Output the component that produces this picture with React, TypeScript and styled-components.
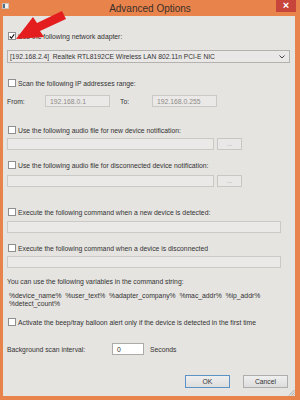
import React from "react";
import styled, { createGlobalStyle } from "styled-components";

const GlobalStyle = createGlobalStyle`
  html, body {
    margin: 0;
    padding: 0;
    background: #e9834c;
  }
  * {
    box-sizing: border-box;
  }
`;

export default function App() {
  return (
    <>
      <GlobalStyle />
      <Window>
        <TitleBar>
          <AppIcon />
          <Title>Advanced Options</Title>
          <CloseButton aria-label="Close">×</CloseButton>
        </TitleBar>

        <Body>
          <CheckRow $top={15}>
            <CheckBox>
              <svg viewBox="0 0 8 8" width="7" height="7">
                <path d="M1 4 L3.2 6.3 L7 1.2" fill="none" stroke="#111" strokeWidth="1.5" />
              </svg>
            </CheckBox>
            <span>Use the following network adapter:</span>
          </CheckRow>
          <Select $top={9}>
            <span>[192.168.2.4]&nbsp;&nbsp;Realtek RTL8192CE Wireless LAN 802.11n PCI-E NIC</span>
            <Chevron viewBox="0 0 6 4">
              <path d="M0.5 0.5 L3 3 L5.5 0.5" fill="none" stroke="#444" strokeWidth="1" />
            </Chevron>
          </Select>

          <CheckRow $top={15}>
            <CheckBox />
            <span>Scan the following IP addresses range:</span>
          </CheckRow>
          <RangeRow $top={7}>
            <FieldLabel $width={38}>From:</FieldLabel>
            <TextBox $width={65} $disabled>192.168.0.1</TextBox>
            <FieldLabel $width={42} $indent={10}>To:</FieldLabel>
            <TextBox $width={65} $disabled>192.168.0.255</TextBox>
          </RangeRow>

          <CheckRow $top={18}>
            <CheckBox />
            <span>Use the following audio file for new device notification:</span>
          </CheckRow>
          <FileRow $top={3}>
            <TextBox $width={207} $disabled />
            <BrowseButton>...</BrowseButton>
          </FileRow>

          <CheckRow $top={10}>
            <CheckBox />
            <span>Use the following audio file for disconnected device notification:</span>
          </CheckRow>
          <FileRow $top={5}>
            <TextBox $width={207} $disabled />
            <BrowseButton>...</BrowseButton>
          </FileRow>

          <CheckRow $top={20}>
            <CheckBox />
            <span>Execute the following command when a new device is detected:</span>
          </CheckRow>
          <FileRow $top={4}>
            <TextBox $width={274} $disabled />
          </FileRow>

          <CheckRow $top={10}>
            <CheckBox />
            <span>Execute the following command when a device is disconnected</span>
          </CheckRow>
          <FileRow $top={3}>
            <TextBox $width={274} $disabled />
          </FileRow>

          <Note $top={9}>You can use the following variables in the command string:</Note>
          <Variables>
            %device_name%&nbsp; %user_text%&nbsp; %adapter_company%&nbsp; %mac_addr%&nbsp; %ip_addr%
            <br />
            %detect_count%
          </Variables>

          <CheckRow $top={9}>
            <CheckBox />
            <span>Activate the beep/tray balloon alert only if the device is detected in the first time</span>
          </CheckRow>

          <IntervalRow>
            <FieldLabel $width={105}>Background scan interval:</FieldLabel>
            <TextBox $width={32}>0</TextBox>
            <Unit>Seconds</Unit>
          </IntervalRow>

          <ButtonBar>
            <DialogButton $default>OK</DialogButton>
            <DialogButton>Cancel</DialogButton>
          </ButtonBar>
          <Grip viewBox="0 0 7 7">
            <path d="M6.5 1 L1 6.5 M6.5 3.5 L3.5 6.5 M6.5 5.5 L5.5 6.5" stroke="#9a9a9a" strokeWidth="0.8" />
          </Grip>
        </Body>

        <Arrow viewBox="0 0 300 60">
          <path d="M62 11 L66 19 L40 31 L44 37 L16 39 L33 17 L37 23 Z" fill="#e41e1e" />
        </Arrow>
      </Window>
    </>
  );
}

const Window = styled.div`
  position: relative;
  width: 300px;
  height: 400px;
  background: #e9834c;
  display: flex;
  flex-direction: column;
  font-family: "Liberation Sans", Arial, sans-serif;
  color: #333;
  overflow: hidden;
`;

const TitleBar = styled.div`
  height: 16px;
  display: flex;
  align-items: center;
  position: relative;
`;

const AppIcon = styled.div`
  position: absolute;
  left: 2px;
  top: 3px;
  width: 7px;
  height: 6px;
  background: #f4f1ee;
  border: 1px solid #c9c2bc;
  &::after {
    content: "";
    position: absolute;
    left: 0;
    top: 0;
    width: 2px;
    height: 4px;
    background: #4f6e84;
  }
`;

const Title = styled.div`
  flex: 1;
  text-align: center;
  font-size: 10px;
  color: #3b3028;
  padding-top: 1px;
`;

const CloseButton = styled.div`
  position: absolute;
  right: 4px;
  top: 0;
  width: 20px;
  height: 12px;
  background: #c8453c;
  color: #fff;
  font-size: 11px;
  font-weight: bold;
  line-height: 11px;
  text-align: center;
`;

const Body = styled.div`
  position: relative;
  flex: 1;
  margin: 0 5px 4px 3px;
  padding: 0 5px 0 4px;
  background: #e6e4e1;
  display: flex;
  flex-direction: column;
  font-size: 6.8px;
`;

const CheckRow = styled.div<{ $top: number }>`
  margin-top: ${(p) => p.$top}px;
  height: 10px;
  display: flex;
  align-items: center;
  gap: 2px;
  padding-left: 1px;
  white-space: nowrap;
`;

const CheckBox = styled.div`
  width: 8px;
  height: 8px;
  flex: none;
  display: flex;
  align-items: center;
  justify-content: center;
  background: #fff;
  border: 1px solid #8f8f8f;
`;

const Select = styled.div<{ $top: number }>`
  margin-top: ${(p) => p.$top}px;
  height: 13px;
  display: flex;
  align-items: center;
  justify-content: space-between;
  padding: 0 4px 0 2px;
  background: #e9e8e6;
  border: 1px solid #b4b2af;
  font-size: 6.7px;
  white-space: nowrap;
`;

const Chevron = styled.svg`
  width: 6px;
  height: 4px;
`;

const RangeRow = styled.div<{ $top: number }>`
  margin-top: ${(p) => p.$top}px;
  height: 12px;
  display: flex;
  align-items: center;
`;

const FileRow = styled.div<{ $top: number }>`
  margin-top: ${(p) => p.$top}px;
  height: 12px;
  display: flex;
  align-items: center;
  gap: 3px;
`;

const FieldLabel = styled.span<{ $width: number; $indent?: number }>`
  width: ${(p) => p.$width}px;
  padding-left: ${(p) => p.$indent ?? 0}px;
  flex: none;
  white-space: nowrap;
`;

const TextBox = styled.div<{ $width: number; $disabled?: boolean }>`
  width: ${(p) => p.$width}px;
  height: 12px;
  flex: none;
  display: flex;
  align-items: center;
  padding-left: 4px;
  background: ${(p) => (p.$disabled ? "#ebe9e7" : "#ffffff")};
  border: 1px solid ${(p) => (p.$disabled ? "#cbc9c6" : "#adaaa7")};
  color: ${(p) => (p.$disabled ? "#8d8b88" : "#333")};
`;

const BrowseButton = styled.div`
  width: 25px;
  height: 12px;
  flex: none;
  display: flex;
  align-items: center;
  justify-content: center;
  background: #eae8e6;
  border: 1px solid #c9c7c4;
  color: #8d8b88;
  font-size: 6px;
`;

const Note = styled.div<{ $top: number }>`
  margin-top: ${(p) => p.$top}px;
  height: 10px;
  line-height: 10px;
  white-space: nowrap;
`;

const Variables = styled.div`
  margin-top: 5px;
  padding-left: 2px;
  line-height: 8px;
  white-space: nowrap;
`;

const IntervalRow = styled.div`
  margin-top: 16px;
  height: 12px;
  display: flex;
  align-items: center;
`;

const Unit = styled.span`
  margin-left: 6px;
`;

const ButtonBar = styled.div`
  margin-top: 20px;
  height: 13px;
  display: flex;
  justify-content: flex-end;
  gap: 13px;
  padding-right: 2px;
`;

const DialogButton = styled.div<{ $default?: boolean }>`
  width: 45px;
  height: 13px;
  display: flex;
  align-items: center;
  justify-content: center;
  background: linear-gradient(#efefef, #dddddd);
  border: 1px solid ${(p) => (p.$default ? "#5b93c6" : "#aeaeae")};
  color: #333;
`;

const Grip = styled.svg`
  position: absolute;
  right: 0;
  bottom: 0;
  width: 7px;
  height: 7px;
`;

const Arrow = styled.svg`
  position: absolute;
  left: 0;
  top: 0;
  width: 300px;
  height: 60px;
  pointer-events: none;
`;
